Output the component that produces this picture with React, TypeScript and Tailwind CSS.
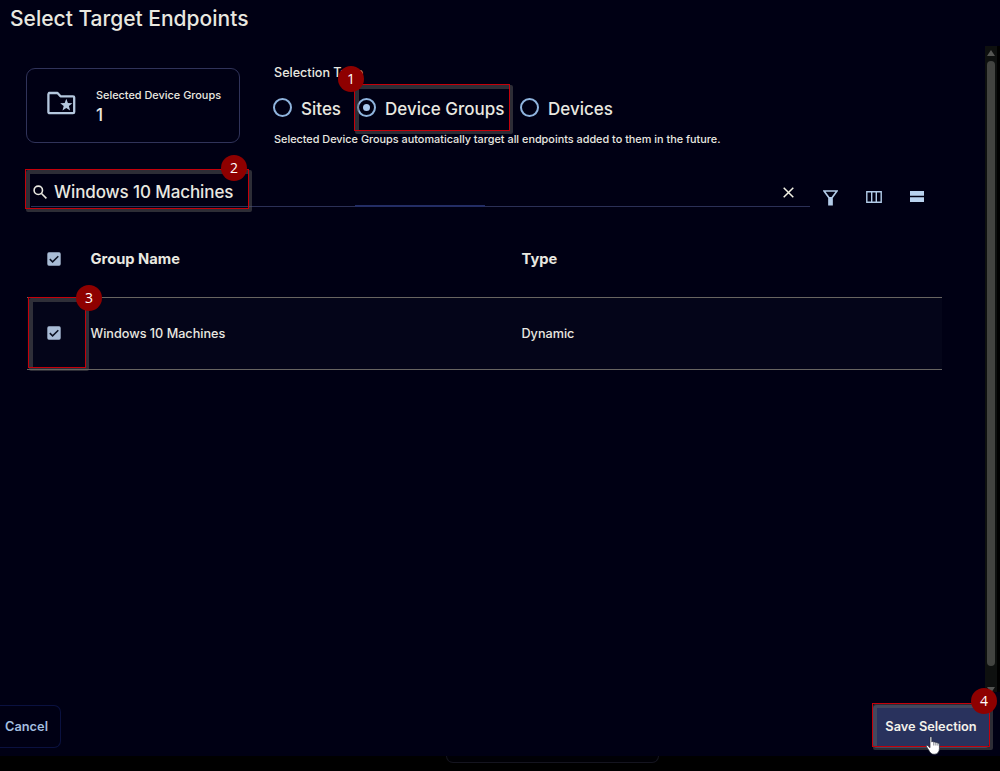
import type { ReactNode } from "react";

function Highlight({ className, badge, step }: { className: string; badge: string; step: number }) {
  return (
    <div className={`pointer-events-none absolute z-10 ${className}`}>
      <div className="absolute -right-[3px] -bottom-[3px] top-px left-px border-4 border-[#64645f]/45 rounded-[2px] blur-[0.7px]" />
      <div className="absolute inset-0 z-10 border border-[#c4000a]" />
      <div
        className={`absolute z-20 flex size-[26px] items-center justify-center rounded-full bg-[#8e0000] font-['Open_Sans',sans-serif] text-[14px] leading-none text-white ${badge}`}
      >
        {step}
      </div>
    </div>
  );
}

function Radio({ label, checked }: { label: string; checked?: boolean }) {
  return (
    <label className="flex items-center">
      <span className="-mt-[3px] flex size-[19px] items-center justify-center rounded-full border-2 border-[#8fb4de]">
        {checked && <span className="size-[7px] rounded-full bg-[#a9c8ee]" />}
      </span>
      <span className="ml-[9px] whitespace-nowrap text-[17px] font-medium leading-6">{label}</span>
    </label>
  );
}

function Checkbox() {
  return (
    <svg viewBox="0 0 14 14" className="-mt-[2px] size-[14px]">
      <rect x="0.3" y="0.3" width="13.4" height="13.4" rx="1.6" fill="#a9bcd6" />
      <path d="M2.8 7.1 5.6 9.9 11.3 4.2" fill="none" stroke="#0b1122" strokeWidth="1.5" />
    </svg>
  );
}

function Row({ children, className }: { children: ReactNode; className: string }) {
  return <div className={`grid grid-cols-[63.5px_431px_1fr] items-center ${className}`}>{children}</div>;
}

export default function App() {
  return (
    <div className="relative h-[771px] w-[1000px] overflow-hidden bg-black font-['Inter',sans-serif] text-[#e9e8e0]">
      <div className="flex h-[756px] flex-col bg-[#000014]">
        <h1 className="h-[46px] pl-[10px] pt-[5px] text-[21px] font-medium leading-7">Select Target Endpoints</h1>

        <div className="flex h-[646px]">
          <main className="w-[985px] pl-[27px] pt-[22px]">
            <section className="flex h-[78px]">
              <div className="-ml-px flex h-[75px] w-[214px] items-center rounded-[9px] border border-[#30335a] pl-[20px]">
                <svg viewBox="0 0 29 24" className="-mt-[5px] h-6 w-[29px]" fill="none">
                  <path d="M2 2h8.5l3 3.3H26a1.2 1.2 0 0 1 1.2 1.2V21a1.2 1.2 0 0 1-1.2 1.2H2.6A1.2 1.2 0 0 1 1.4 21V3.2Z" stroke="#b4c7de" strokeWidth="2.3" strokeLinejoin="round" />
                  <path d="m19.3 7.8 1.6 4.2 4.5.2-3.5 2.8 1.2 4.4-3.8-2.5-3.8 2.5 1.2-4.4-3.5-2.8 4.5-.2Z" fill="#b4c7de" />
                </svg>
                <div className="ml-[20px] mt-[2px]">
                  <p className="whitespace-nowrap text-[10.9px] font-medium leading-4">Selected Device Groups</p>
                  <p className="mt-px text-[17px] font-medium leading-[22px]">1</p>
                </div>
              </div>
              <div className="ml-[34px]">
                <p className="-mt-[3px] text-[12.6px] font-medium leading-4">Selection Type</p>
                <div className="-ml-px mt-[16px] flex items-center">
                  <div className="w-[84px]"><Radio label="Sites" /></div>
                  <div className="w-[163px]"><Radio label="Device Groups" checked /></div>
                  <Radio label="Devices" />
                </div>
                <p className="mt-[10px] whitespace-nowrap text-[10.87px] font-medium leading-4">
                  Selected Device Groups automatically target all endpoints added to them in the future.
                </p>
              </div>
            </section>

            <section className="mt-[30px] flex h-[46px]">
              <div className="ml-[4px] flex h-[31px] w-[779px] items-center border-b border-[#2b3056]">
                <svg viewBox="0 0 14 14" className="ml-[2px] mt-px size-[14px]" fill="none" stroke="#e9e8e0" strokeWidth="1.6">
                  <circle cx="5.3" cy="5.3" r="4.2" />
                  <path d="m8.5 8.5 4.9 4.9" />
                </svg>
                <span className="ml-[7px] mt-[3px] text-[17px] font-medium tracking-[-0.1px]">Windows 10 Machines</span>
                <svg viewBox="0 0 11 11" className="ml-auto mr-[16px] mt-[2px] size-[11px]" stroke="#f2f1e4" strokeWidth="1.5">
                  <path d="m.7.7 9.6 9.6M10.3.7.7 10.3" />
                </svg>
              </div>
              <div className="ml-[13px] flex items-start gap-[28px] pt-[14px]">
                <svg viewBox="0 0 15 16" className="h-4 w-[15px]" fill="none">
                  <path d="M1 1h13L9 7.7v7H6v-7Z" stroke="#b2cbe8" strokeWidth="1.7" />
                  <path d="M6 7h3v8H6Z" fill="#b2cbe8" />
                </svg>
                <svg viewBox="0 0 16 12" className="mt-px h-3 w-4" fill="none" stroke="#b2cbe8" strokeWidth="1.4">
                  <path d="M.8.8h14.4v10.4H.8ZM5.7 1v10M10.3 1v10" />
                </svg>
                <svg viewBox="0 0 14 11" className="mt-px h-[11px] w-[14px]" fill="#b9d2ee">
                  <path d="M0 0h14v4.8H0ZM0 6.2h14V11H0Z" />
                </svg>
              </div>
            </section>

            <section className="w-[915px]">
              <Row className="h-[75px] text-[14.7px] font-bold">
                <span className="pl-[20px]"><Checkbox /></span>
                <span className="-mt-px">Group Name</span>
                <span className="-mt-px">Type</span>
              </Row>
              <Row className="h-[73px] border-y border-[#686561] bg-[#040519] text-[12.65px] font-medium">
                <span className="pl-[20px]"><Checkbox /></span>
                <span className="mt-[2px]">Windows 10 Machines</span>
                <span className="mt-[2px]">Dynamic</span>
              </Row>
            </section>
          </main>
          <div className="flex w-[12px] flex-col items-center bg-[#0e100f] pt-[4px]">
            <svg viewBox="0 0 8 6" className="h-[6px] w-2 shrink-0" fill="#555653"><path d="M4 0 8 6H0Z" /></svg>
            <div className="mt-[5px] h-[605px] w-[8px] shrink-0 rounded-full bg-[#424340]" />
            <svg viewBox="0 0 8 6" className="mt-[21px] h-[6px] w-2 shrink-0" fill="#555653"><path d="M0 0h8L4 6Z" /></svg>
          </div>
          <div className="w-[3px] bg-black" />
        </div>

        <footer className="flex justify-between pr-[11px] pt-[13px]">
          <button className="h-[43px] w-[61px] rounded-r-[7px] border border-l-0 border-[#0a1140] pl-[5px] text-left text-[12.8px] font-semibold text-[#a2bddf]">
            Cancel
          </button>
          <button className="h-[43px] w-[116px] rounded-[4px] bg-[#29325d] text-[12.8px] font-semibold text-[#f3f1ea]">
            Save Selection
          </button>
        </footer>
      </div>
      <div className="ml-[446px] h-[7px] w-[213px] rounded-b-[9px] border border-t-0 border-[#14141f] bg-[#000005]" />

      <div className="absolute left-[355px] top-[205px] h-[2px] w-[130px] bg-[#232d65]" />

      <Highlight className="left-[354px] top-[84px] h-[47px] w-[156px]" badge="-left-[16px] -top-[18px]" step={1} />
      <Highlight className="left-[25px] top-[169px] h-[40px] w-[224px]" badge="-top-[14px] left-[196px]" step={2} />
      <Highlight className="left-[28px] top-[297px] h-[71px] w-[58px]" badge="-top-[12px] left-[48px]" step={3} />
      <Highlight className="left-[872px] top-[703px] h-[44px] w-[118px]" badge="-top-[15px] left-[99px]" step={4} />

      <svg viewBox="0 0 14 19" className="absolute left-[926px] top-[736px] z-20 h-[19px] w-[14px]">
        <path
          d="M4 1.4c0-1 1.8-1 1.8 0V6c.5-.7 1.8-.5 2 .3.6-.6 1.8-.4 2 .4.7-.5 1.8-.2 2 .6.6-.3 1.6 0 1.6 1v4.2c0 3.5-2 5.8-5.3 5.8-3 0-4-1.6-5.4-4.2L.5 10.7c-.5-1 .8-1.6 1.5-.9l2 1.9Z"
          fill="#fff"
          stroke="#222838"
          strokeWidth=".7"
        />
        <path d="M7.8 6.5v3M9.9 7v2.5M11.9 7.6v2" stroke="#222838" strokeWidth=".6" />
      </svg>
    </div>
  );
}
